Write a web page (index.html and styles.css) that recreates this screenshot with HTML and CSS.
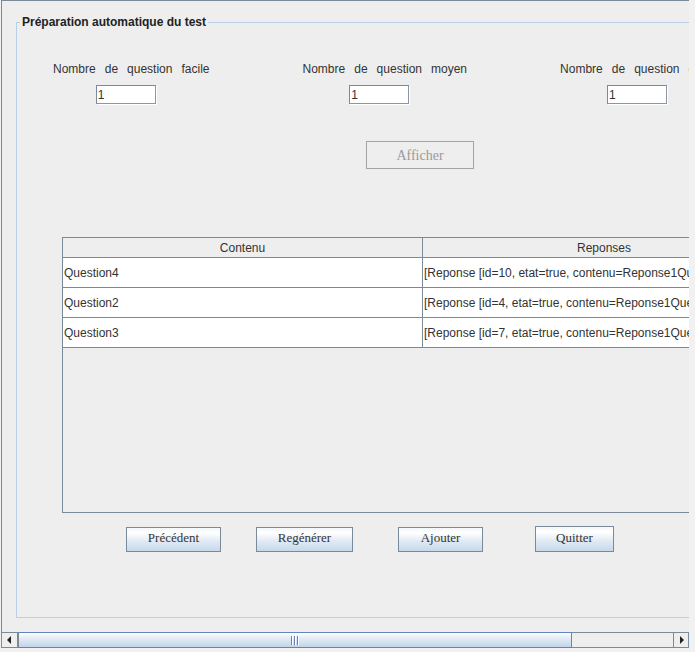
FILE: index.html
```html
<!DOCTYPE html>
<html lang="fr">
<head>
<meta charset="utf-8">
<title>Préparation automatique du test</title>
<link rel="stylesheet" href="styles.css">
</head>
<body>
<div class="frame">
  <div class="viewport">
    <div class="panel">
      <fieldset class="group">
        <legend class="group-title">Préparation automatique du test</legend>
        <div class="params">
          <div class="param">
            <label class="param-label" for="q1">Nombre de question facile</label>
            <input class="field" id="q1" type="text" value="1">
          </div>
          <div class="param">
            <label class="param-label" for="q2">Nombre de question moyen</label>
            <input class="field" id="q2" type="text" value="1">
          </div>
          <div class="param">
            <label class="param-label" for="q3">Nombre de question difficile</label>
            <input class="field" id="q3" type="text" value="1">
          </div>
        </div>
        <button class="btn-disabled" type="button" disabled>Afficher</button>
        <div class="table-pane">
          <table class="grid">
            <thead>
              <tr><th class="col-a">Contenu</th><th class="col-b">Reponses</th></tr>
            </thead>
            <tbody>
              <tr><td>Question4</td><td>[Reponse [id=10, etat=true, contenu=Reponse1Question4]]</td></tr>
              <tr><td>Question2</td><td>[Reponse [id=4, etat=true, contenu=Reponse1Question2]]</td></tr>
              <tr><td>Question3</td><td>[Reponse [id=7, etat=true, contenu=Reponse1Question3]]</td></tr>
            </tbody>
          </table>
        </div>
        <div class="actions">
          <button class="btn btn-prev" type="button">Précédent</button>
          <button class="btn btn-regen" type="button">Regénérer</button>
          <button class="btn btn-add" type="button">Ajouter</button>
          <button class="btn btn-quit" type="button">Quitter</button>
        </div>
      </fieldset>
    </div>
  </div>
  <div class="hscroll">
    <div class="arrow arrow-left">
      <svg width="4" height="8" viewBox="0 0 4 8"><polygon points="4,0 4,8 0,4" fill="#222"/></svg>
    </div>
    <div class="thumb">
      <span class="grip"></span><span class="grip"></span><span class="grip"></span>
    </div>
    <div class="track"></div>
    <div class="arrow arrow-right">
      <svg width="4" height="8" viewBox="0 0 4 8"><polygon points="0,0 0,8 4,4" fill="#222"/></svg>
    </div>
  </div>
</div>
</body>
</html>
```
FILE: styles.css
```css
html, body {
  margin: 0;
  padding: 0;
}

body {
  background: #f1f1f1;
  font-family: "Liberation Sans", Arial, sans-serif;
  font-size: 12px;
  color: #333333;
  width: 695px;
  height: 652px;
  overflow: hidden;
}

.frame {
  margin-left: 1px;
  width: 688px;
  height: 648px;
  box-sizing: border-box;
  border-top: 1px solid #7a8a99;
  border-left: 1px solid #7a8a99;
  background: #eeeeee;
  display: flex;
  flex-direction: column;
}

.viewport {
  flex: 1;
  overflow: hidden;
  position: relative;
}

.panel {
  width: 830px;
  padding-left: 14px;
  padding-top: 14px;
}

.group {
  margin: 0;
  padding: 0;
  min-width: 0;
  width: 800px;
  height: 603px;
  box-sizing: border-box;
  border: 1px solid #b8cfe5;
}

.group-title {
  margin-left: 3px;
  padding: 0 2px;
  font-weight: bold;
  font-size: 12px;
  line-height: 14px;
  color: #222222;
}

.params {
  display: flex;
  gap: 93px;
  margin-top: 33px;
  padding-left: 36px;
}

.param {
  display: flex;
  flex-direction: column;
  align-items: center;
}

.param-label {
  white-space: nowrap;
  word-spacing: 5.7px;
  line-height: 14px;
}

.field {
  margin: 9px 11px 0 0;
  width: 60px;
  height: 19px;
  box-sizing: border-box;
  padding: 0 0 0 1px;
  border: 1px solid #7a8a99;
  border-right-color: #8a98a6;
  border-bottom-color: #8a98a6;
  box-shadow: 1px 1px 0 #ffffff;
  background: #ffffff;
  font-family: "Liberation Sans", Arial, sans-serif;
  font-size: 12px;
  color: #333333;
  outline: none;
}

.btn-disabled {
  display: block;
  margin: 37px 0 0 349px;
  width: 108px;
  height: 28px;
  box-sizing: border-box;
  border: 1px solid #a3a3a3;
  background: #eeeeee;
  color: #9a9a9a;
  font-family: "Liberation Serif", "Times New Roman", serif;
  font-size: 14px;
  padding: 2px 0 0 0;
}

.table-pane {
  margin: 68px 0 0 45px;
  width: 724px;
  height: 276px;
  box-sizing: border-box;
  border-top: 1px solid #7a8a99;
  border-left: 1px solid #7a8a99;
  border-bottom: 1px solid #7a8a99;
  background: #eeeeee;
}

.grid {
  border-collapse: separate;
  border-spacing: 0;
  table-layout: fixed;
  width: 723px;
}

.col-a {
  width: 360px;
}

.col-b {
  width: 363px;
}

.grid th,
.grid td {
  box-sizing: border-box;
  border-right: 1px solid #7a8a99;
  border-bottom: 1px solid #7a8a99;
  white-space: nowrap;
  overflow: hidden;
  font-size: 12px;
  color: #333333;
}

.grid th {
  height: 20px;
  padding: 1px 0 0 0;
  background: #eeeeee;
  font-weight: normal;
  text-align: center;
  line-height: 18px;
}

.grid td {
  height: 30px;
  padding: 0 0 0 1px;
  background: #ffffff;
  line-height: 28px;
}

.actions {
  display: flex;
  align-items: flex-end;
  margin-top: 13px;
  padding-left: 109px;
}

.btn {
  height: 25px;
  box-sizing: border-box;
  padding: 0 0 3px 0;
  border: 1px solid #7a8a99;
  background: linear-gradient(to bottom, #f3f7fb 0%, #ffffff 22%, #e2ebf5 55%, #c7d8ea 100%);
  color: #333333;
  font-family: "Liberation Serif", "Times New Roman", serif;
  font-size: 13px;
}

.btn-prev {
  width: 95px;
}

.btn-regen {
  width: 97px;
  margin-left: 35px;
}

.btn-add {
  width: 85px;
  margin-left: 45px;
}

.btn-quit {
  width: 79px;
  height: 26px;
  margin-left: 52px;
}

.hscroll {
  display: flex;
  height: 16px;
  flex-shrink: 0;
}

.arrow {
  width: 16px;
  height: 16px;
  box-sizing: border-box;
  border: 1px solid #7a8a99;
  background: #eeeeee;
  display: flex;
  align-items: center;
  justify-content: center;
}

.arrow-left {
  border-left: 0;
  padding-right: 2px;
}

.arrow-right {
  padding-left: 2px;
}

.thumb {
  width: 554px;
  height: 16px;
  box-sizing: border-box;
  border: 1px solid #6382bf;
  border-left-color: #7a8a99;
  background: linear-gradient(to bottom, #ffffff 0%, #e8eff8 30%, #d4e1f0 65%, #c3d4ea 100%);
  display: flex;
  align-items: center;
  justify-content: center;
  gap: 1px;
}

.grip {
  width: 1px;
  height: 9px;
  background: #6382bf;
  border-right: 1px solid #ffffff;
}

.track {
  flex: 1;
  height: 16px;
  box-sizing: border-box;
  border-top: 1px solid #7a8a99;
  border-bottom: 1px solid #7a8a99;
  background: #eeeeee;
}
```
